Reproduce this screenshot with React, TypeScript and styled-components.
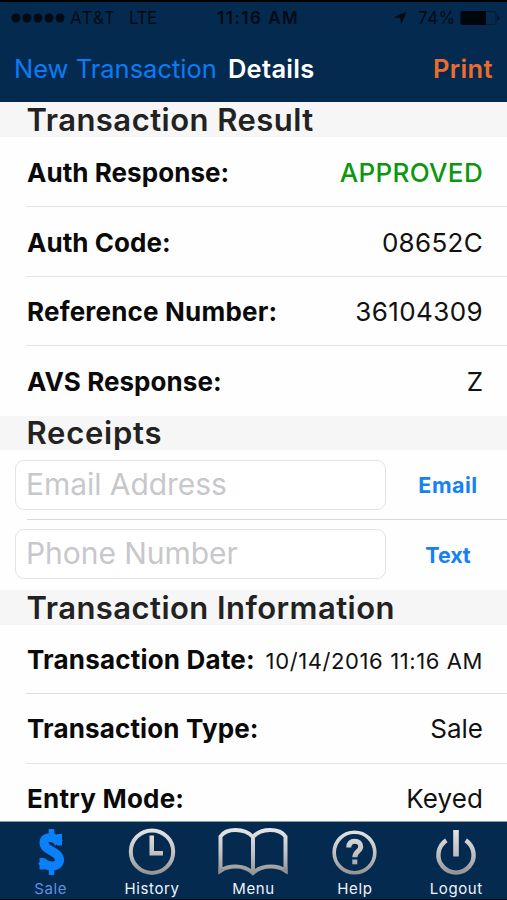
import React from "react";
import styled, { createGlobalStyle } from "styled-components";

const GlobalStyle = createGlobalStyle`
  * { box-sizing: border-box; }
  body {
    margin: 0;
    background: #fff;
    font-family: Inter, "Liberation Sans", sans-serif;
    overflow: hidden;
  }
`;

const navy = "#042a50";

const Screen = styled.div`
  display: flex;
  flex-direction: column;
  width: 507px;
  height: 900px;
  overflow: hidden;
  background: #fefefe;
  border-bottom: 1px solid #01060d;
`;

const StatusBar = styled.div`
  flex: none;
  display: grid;
  grid-template-columns: 206px 1fr 198px;
  align-items: center;
  height: 36px;
  padding-bottom: 2px;
  border-top: 2px solid #000;
  background: ${navy};
  color: #020a14;
  font-size: 17px;
  line-height: 32px;
  white-space: pre;
`;

const StatusGroup = styled.div`
  display: flex;
  align-items: center;
`;

const Signal = styled.svg`
  display: block;
  margin: 0 5px 0 11px;
`;

const Carrier = styled.span`
  letter-spacing: 1.1px;
`;

const Network = styled.span`
  margin-left: 13px;
  letter-spacing: -0.5px;
`;

const Clock = styled.span`
  margin-left: 11px;
  font-weight: 600;
  letter-spacing: 1.5px;
`;

const Percent = styled.span`
  margin-left: 11px;
  letter-spacing: 0.5px;
`;

const LocationArrow = styled.svg`
  margin-left: 84px;
`;

const Battery = styled.svg`
  margin-left: 4px;
`;

const NavBar = styled.header`
  flex: none;
  display: flex;
  align-items: center;
  height: 66px;
  padding: 0 14px 1px 14px;
  background: ${navy};
  font-size: 25.5px;
  line-height: 65px;
  white-space: nowrap;
`;

const BackLink = styled.a`
  color: #0a7cf4;
`;

const Title = styled.h1`
  margin: 0 auto 0 11px;
  color: #fff;
  font-size: inherit;
  font-weight: 600;
  letter-spacing: 0.3px;
`;

const PrintLink = styled.a`
  color: #ee6c2c;
  font-weight: 600;
  letter-spacing: 0.4px;
`;

const Content = styled.main`
  flex: none;
  height: 720px;
  overflow: hidden;
`;

const SectionHeader = styled.h2<{ $height: number; $tracking: number }>`
  height: ${(p) => p.$height}px;
  margin: 0;
  padding-left: 26.5px;
  background: #f6f6f6;
  color: #222;
  font-size: 31px;
  font-weight: 600;
  line-height: ${(p) => p.$height}px;
  letter-spacing: ${(p) => p.$tracking}px;
`;

const Row = styled.div<{ $height: number; $shift: number; $last?: boolean; $tone?: string }>`
  display: flex;
  align-items: baseline;
  justify-content: space-between;
  height: ${(p) => p.$height}px;
  margin-left: 26px;
  padding: ${(p) => p.$shift}px 24px 0 1px;
  border-bottom: 1px solid ${(p) => (p.$last ? "transparent" : p.$tone || "#e4e4e6")};
  color: #0a0a0a;
  font-size: 26px;
  line-height: ${(p) => p.$height}px;
  white-space: nowrap;
`;

const Label = styled.span<{ $tracking: number }>`
  font-weight: 700;
  letter-spacing: ${(p) => p.$tracking}px;
`;

const Value = styled.span<{ $tracking: number; $size?: number; $approved?: boolean }>`
  color: ${(p) => (p.$approved ? "#0c970f" : "#111")};
  font-size: ${(p) => p.$size || 26}px;
  font-weight: ${(p) => (p.$approved ? 550 : 400)};
  letter-spacing: ${(p) => p.$tracking}px;
`;

const ReceiptList = styled.div`
  display: grid;
  grid-template-rows: 70px 70px;
`;

const ReceiptRow = styled.form`
  display: grid;
  grid-template-columns: 371px 1fr;
  align-items: center;
  padding-left: 15px;
  background: linear-gradient(#d9d9db, #d9d9db) 27px 100% / 100% 1px no-repeat;

  &:last-child {
    background: none;
    padding-bottom: 2px;
  }
`;

const Field = styled.input`
  width: 371px;
  height: 50px;
  padding: 0 10px 3px;
  border: 1px solid #e3e3e5;
  border-radius: 9px;
  outline: none;
  background: #fff;
  font: 400 30px Inter, sans-serif;
  letter-spacing: -0.05px;

  &::placeholder {
    color: #c7c7cc;
    opacity: 1;
  }
`;

const SendButton = styled.button<{ $tracking: number; $drop?: number }>`
  margin: ${(p) => p.$drop || 0}px 0 0 3px;
  padding: 0;
  border: 0;
  background: none;
  color: #1680f5;
  font: 650 21.5px Inter, sans-serif;
  letter-spacing: ${(p) => p.$tracking}px;
`;

const TabBar = styled.nav`
  flex: 1;
  display: grid;
  grid-template-columns: repeat(5, 1fr);
  background: ${navy};
  box-shadow: 0 -1px 0 #8b9aa5;
`;

const Tab = styled.a<{ $active?: boolean }>`
  display: flex;
  flex-direction: column;
  align-items: center;
  color: ${(p) => (p.$active ? "#6090df" : "#f1f4f8")};
  font-size: 15px;
  line-height: 17px;
  letter-spacing: 0.6px;

  svg {
    display: block;
    flex: none;
    width: 80px;
    height: 58px;
  }
`;

type Detail = {
  label: string;
  value: string;
  lt: number;
  vt: number;
  height: number;
  shift?: number;
  size?: number;
  approved?: boolean;
  last?: boolean;
  tone?: string;
};

const details: Detail[] = [
  { label: "Auth Response:", value: "APPROVED", lt: 0.05, vt: 0.35, height: 70, shift: 1, approved: true },
  { label: "Auth Code:", value: "08652C", lt: 0.05, vt: 0.3, height: 70, shift: 1 },
  { label: "Reference Number:", value: "36104309", lt: 0.2, vt: 0.4, height: 69 },
  { label: "AVS Response:", value: "Z", lt: 0.05, vt: 0, height: 70, shift: 1, last: true },
];

const info: Detail[] = [
  { label: "Transaction Date:", value: "10/14/2016 11:16 AM", lt: 0.2, vt: 0.6, height: 69, size: 22, tone: "#dedee0" },
  { label: "Transaction Type:", value: "Sale", lt: 0.15, vt: 0, height: 70 },
  { label: "Entry Mode:", value: "Keyed", lt: 0.2, vt: 0.1, height: 70, last: true },
];

const DetailRow = ({ label, value, lt, vt, height, shift = 0, size, approved, last, tone }: Detail) => (
  <Row $height={height} $shift={shift} $last={last} $tone={tone}>
    <Label $tracking={lt}>{label}</Label>
    <Value $tracking={vt} $size={size} $approved={approved}>
      {value}
    </Value>
  </Row>
);

const Metal = ({ id }: { id: string }) => (
  <defs>
    <linearGradient id={id} gradientUnits="userSpaceOnUse" x1="0" y1="6" x2="0" y2="54">
      <stop offset="0" stopColor="#e6e6e6" />
      <stop offset="0.5" stopColor="#c4c4c4" />
      <stop offset="1" stopColor="#8f8f8f" />
    </linearGradient>
  </defs>
);

const DollarIcon = () => (
  <svg viewBox="0 0 80 58" fill="none" stroke="#0a80fb">
    <path d="M40.500 7v7M40.500 45v8" strokeWidth="5.500" />
    <path
      d="M48 21c-2.500-4-5.500-5.500-8.500-5.500-4.500 0-6.500 2.200-6.500 5.300 0 8.700 15.500 7.700 15.500 17.200 0 4-3.300 6-8 6-4.500 0-7.500-2-9.500-5"
      strokeWidth="9"
    />
    <path d="M46 12h5v11.500h-5zM28.500 36h5v11.500h-5z" fill="#0a80fb" stroke="none" />
  </svg>
);

const HistoryIcon = () => (
  <svg viewBox="0 0 80 58" fill="none">
    <Metal id="metalClock" />
    <circle cx="40" cy="29.700" r="21.200" stroke="url(#metalClock)" strokeWidth="4" />
    <path d="M37.500 13.500h4.500v15.500h9v4.500h-13.500z" fill="url(#metalClock)" />
  </svg>
);

const MenuIcon = () => (
  <svg viewBox="0 0 80 58" fill="none">
    <Metal id="metalBook" />
    <path
      d="M7.500 48.500V14.500C10.500 10 16 8 22.500 8S36 10.500 40 15C44 10.500 50 8 57 8s12.500 2 15.500 6.500v34C68.500 46 63.500 44.500 58 44.500c-7 0-13.500 2.300-18 6.500-4.500-4.200-10.500-6.500-17.500-6.500-5.500 0-11 1.500-15 4zM40 15v34"
      stroke="url(#metalBook)"
      strokeWidth="4"
      strokeLinejoin="miter"
    />
    <path d="M5.500 44v8.500l6-4zM74.500 44v8.500l-6-4z" fill="#8f9397" />
  </svg>
);

const HelpIcon = () => (
  <svg viewBox="0 0 80 58" fill="none">
    <Metal id="metalHelp" />
    <circle cx="39.500" cy="30.500" r="20.300" stroke="url(#metalHelp)" strokeWidth="3.600" />
    <path
      d="M33.700 25.500c.200-4.200 2.600-6.200 6-6.200 3.600 0 6 2 6 5.200 0 5-5.900 4.900-5.900 10.700"
      stroke="url(#metalHelp)"
      strokeWidth="5"
    />
    <path d="M37.300 37.500h5v4.800h-5z" fill="url(#metalHelp)" />
  </svg>
);

const LogoutIcon = () => (
  <svg viewBox="0 0 80 58" fill="none">
    <Metal id="metalPower" />
    <path
      d="M30.300 18.300A17.600 17.600 0 1 0 49.700 18.300"
      stroke="url(#metalPower)"
      strokeWidth="4.400"
    />
    <path d="M37.200 8h5.600v26.500h-5.600z" fill="url(#metalPower)" />
  </svg>
);

const tabs = [
  { name: "Sale", Icon: DollarIcon, active: true },
  { name: "History", Icon: HistoryIcon },
  { name: "Menu", Icon: MenuIcon },
  { name: "Help", Icon: HelpIcon },
  { name: "Logout", Icon: LogoutIcon },
];

export default function App() {
  return (
    <>
      <GlobalStyle />
      <Screen>
        <StatusBar>
          <StatusGroup>
            <Signal width="54" height="10" fill="#020a14">
              {[5, 16, 27, 38, 49].map((x) => (
                <circle key={x} cx={x} cy="5" r="4.500" />
              ))}
            </Signal>
            <Carrier>AT&amp;T</Carrier>
            <Network>LTE</Network>
          </StatusGroup>
          <Clock>11:16 AM</Clock>
          <StatusGroup>
            <LocationArrow width="14" height="14" viewBox="0 0 14 14" fill="#020a14">
              <path d="M13.500.5 8 13.500 7.300 7 .8 6.300z" />
            </LocationArrow>
            <Percent>74%</Percent>
            <Battery width="40" height="16" viewBox="0 0 40 16">
              <rect x="1" y="1.500" width="35" height="13" rx="2" fill="none" stroke="#031b37" />
              <path d="M2.500 1h23.500v14h-23.500a2 2 0 0 1-2-2v-10a2 2 0 0 1 2-2z" fill="#01060d" />
              <path d="M37.500 5.500c2.500.5 2.500 4.500 0 5z" fill="#020a14" />
            </Battery>
          </StatusGroup>
        </StatusBar>
        <NavBar>
          <BackLink>New Transaction</BackLink>
          <Title>Details</Title>
          <PrintLink>Print</PrintLink>
        </NavBar>
        <Content>
          <SectionHeader $height={35} $tracking={0.47}>Transaction Result</SectionHeader>
          {details.map((d) => (
            <DetailRow key={d.label} {...d} />
          ))}
          <SectionHeader $height={34} $tracking={0.75}>Receipts</SectionHeader>
          <ReceiptList>
            <ReceiptRow>
              <Field placeholder="Email Address" />
              <SendButton type="button" $tracking={0.5}>Email</SendButton>
            </ReceiptRow>
            <ReceiptRow>
              <Field placeholder="Phone Number" />
              <SendButton type="button" $tracking={-0.1} $drop={2}>Text</SendButton>
            </ReceiptRow>
          </ReceiptList>
          <SectionHeader $height={35} $tracking={0.45}>Transaction Information</SectionHeader>
          {info.map((d) => (
            <DetailRow key={d.label} {...d} />
          ))}
        </Content>
        <TabBar>
          {tabs.map(({ name, Icon, active }) => (
            <Tab key={name} $active={active}>
              <Icon />
              {name}
            </Tab>
          ))}
        </TabBar>
      </Screen>
    </>
  );
}
